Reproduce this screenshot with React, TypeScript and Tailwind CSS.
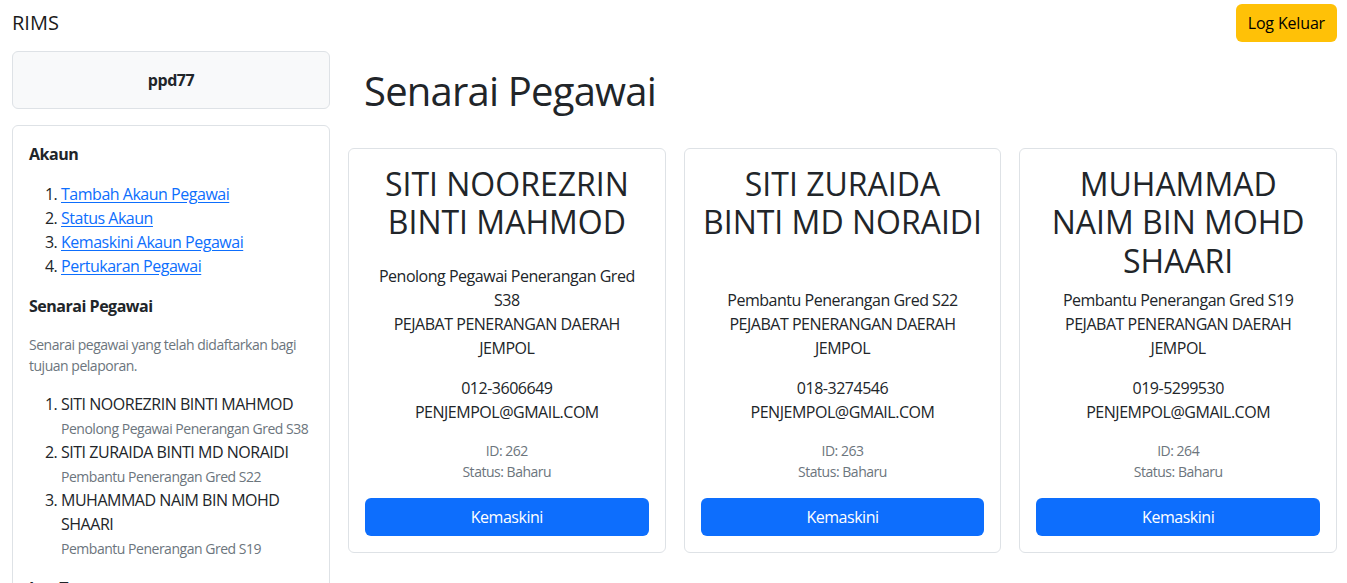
import React from "react";

const pegawai = [
  {
    id: 262,
    nama: "SITI NOOREZRIN BINTI MAHMOD",
    jawatan: "Penolong Pegawai Penerangan Gred S38",
    pejabat: "PEJABAT PENERANGAN DAERAH JEMPOL",
    telefon: "012-3606649",
    emel: "PENJEMPOL@GMAIL.COM",
    status: "Baharu",
  },
  {
    id: 263,
    nama: "SITI ZURAIDA BINTI MD NORAIDI",
    jawatan: "Pembantu Penerangan Gred S22",
    pejabat: "PEJABAT PENERANGAN DAERAH JEMPOL",
    telefon: "018-3274546",
    emel: "PENJEMPOL@GMAIL.COM",
    status: "Baharu",
  },
  {
    id: 264,
    nama: "MUHAMMAD NAIM BIN MOHD SHAARI",
    jawatan: "Pembantu Penerangan Gred S19",
    pejabat: "PEJABAT PENERANGAN DAERAH JEMPOL",
    telefon: "019-5299530",
    emel: "PENJEMPOL@GMAIL.COM",
    status: "Baharu",
  },
];

const menuAkaun = [
  "Tambah Akaun Pegawai",
  "Status Akaun",
  "Kemaskini Akaun Pegawai",
  "Pertukaran Pegawai",
];

const Sidebar = () => {
  return (
    <aside className="w-[318px] shrink-0 mt-[5px]">
      <div className="h-[58px] flex items-center justify-center rounded-md border border-[#dee2e6] bg-[#f8f9fa] font-bold text-base">
        ppd77
      </div>
      <div className="mt-4 rounded-md border border-[#dee2e6] bg-white p-4">
        <h6 className="font-bold text-base leading-6 mb-4">Akaun</h6>
        <ol className="list-decimal pl-8 mb-4 leading-6">
          {menuAkaun.map((m) => (
            <li key={m}>
              <a href="#" className="text-[#0d6efd] underline underline-offset-2">
                {m}
              </a>
            </li>
          ))}
        </ol>
        <h6 className="font-bold text-base leading-6 mb-4">Senarai Pegawai</h6>
        <p className="text-sm leading-[21px] text-[#6c757d] mb-4">
          Senarai pegawai yang telah didaftarkan bagi tujuan pelaporan.
        </p>
        <ol className="list-decimal pl-8 mb-4 leading-6">
          {pegawai.map((p) => (
            <li key={p.id}>
              {p.nama}
              <br />
              <small className="text-sm text-[#6c757d]">{p.jawatan}</small>
            </li>
          ))}
        </ol>
        <h6 className="font-bold text-base leading-6 mb-4">Log Tugasan</h6>
        <p className="text-sm leading-[21px] text-[#6c757d]">Rekod tugasan harian pegawai.</p>
      </div>
    </aside>
  );
};

const KadPegawai = ({ p }: { p: (typeof pegawai)[number] }) => {
  return (
    <div className="rounded-md border border-[#dee2e6] bg-white p-4 flex flex-col text-center">
      <h2 className="text-[32px] font-medium leading-[1.2] tracking-normal mb-2">{p.nama}</h2>
      <div className="mt-auto">
        <p className="leading-6 mb-4">
          {p.jawatan}
          <br />
          {p.pejabat}
        </p>
        <p className="leading-6 mb-4">
          {p.telefon}
          <br />
          {p.emel}
        </p>
        <p className="text-sm leading-[21px] text-[#6c757d] mb-4">
          ID: {p.id}
          <br />
          Status: {p.status}
        </p>
        <button className="w-full h-[38px] rounded-md bg-[#0d6efd] text-white text-base">
          Kemaskini
        </button>
      </div>
    </div>
  );
};

export default function App() {
  return (
    <div className="h-screen overflow-hidden bg-white text-[#212529] text-base tracking-[-0.03em] font-['Open_Sans',sans-serif]">
      <nav className="h-[46px] flex items-center justify-between pl-3 pr-[10px]">
        <span className="text-xl text-[#1a1a1a] tracking-normal">RIMS</span>
        <button className="h-[38px] px-3 rounded-md bg-[#ffc107] text-black text-base tracking-[-0.01em]">
          Log Keluar
        </button>
      </nav>
      <div className="flex gap-[18px] pl-3 pr-[10px]">
        <Sidebar />
        <main className="flex-1 pt-[5px]">
          <h1 className="text-[40px] font-medium leading-[48px] tracking-[-0.02em] ml-4 mt-4 mb-[33px]">
            Senarai Pegawai
          </h1>
          <div className="grid grid-cols-3 gap-[18px]">
            {pegawai.map((p) => (
              <KadPegawai key={p.id} p={p} />
            ))}
          </div>
        </main>
      </div>
    </div>
  );
}
